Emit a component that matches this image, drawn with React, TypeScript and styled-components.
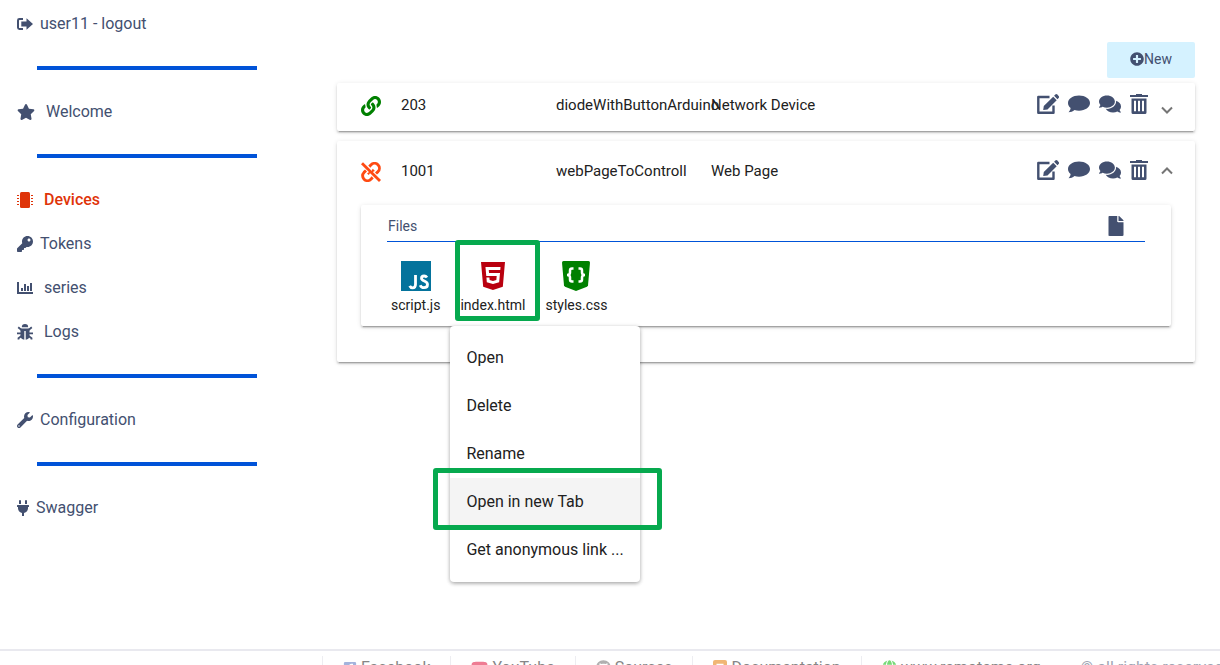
import React from 'react';
import styled, { createGlobalStyle, css } from 'styled-components';
import {
  FaComments,
  FaFacebookSquare,
  FaFile,
  FaGithub,
  FaGlobe,
  FaHtml5,
  FaKey,
  FaLink,
  FaPlug,
  FaPlusCircle,
  FaStar,
  FaWrench,
  FaYoutube,
} from 'react-icons/fa';

const ink = '#435070';
const blue = '#0053d8';
const mark = '#06a94e';

const GlobalStyle = createGlobalStyle`
  *, *::before, *::after { box-sizing: border-box; }
  html { scrollbar-width: none; overflow-x: hidden; }
  body {
    margin: 0;
    background: #fff;
    color: #212121;
    font-family: Roboto, "Liberation Sans", sans-serif;
    font-size: 14px;
    line-height: 20px;
  }
  button { font: inherit; color: inherit; border: 0; padding: 0; background: none; cursor: pointer; }
  a { color: inherit; text-decoration: none; }
  svg { display: block; flex: none; }
`;

const Layout = styled.div`
  display: flex;
  min-height: calc(100vh - 16px);
`;

const Sidebar = styled.nav`
  flex: 0 0 312px;
  padding-top: 2px;
  font-size: 16px;
  color: ${ink};
`;

const NavLink = styled.a<{ $active?: boolean; $wide?: boolean }>`
  display: flex;
  align-items: center;
  height: 44px;
  padding-left: 17px;
  gap: ${(p) => (p.$wide ? 11 : 7)}px;
  ${(p) => p.$active && css`color: #df3409; font-weight: 500;`}
`;

const PlugIcon = styled(FaPlug)`
  width: 12px;
  height: 16px;
`;

const Divider = styled.hr`
  height: 4px;
  margin: 20px 55px 20px 37px;
  border: 0;
  background: ${blue};
`;

const Main = styled.main`
  flex: 1;
  min-width: 0;
  padding: 42px 25px 0;
`;

const Toolbar = styled.div`
  display: flex;
  justify-content: flex-end;
  margin-bottom: 5px;
`;

const NewButton = styled.button`
  display: flex;
  align-items: center;
  justify-content: center;
  width: 88px;
  height: 36px;
  padding-bottom: 2px;
  border-radius: 2px;
  background: #d5f2ff;
  color: ${ink};
`;

const raised = css`
  border-radius: 2px;
  background: #fff;
  box-shadow: 0 3px 1px -2px rgba(0, 0, 0, 0.2), 0 2px 2px 0 rgba(0, 0, 0, 0.14),
    0 1px 5px 0 rgba(0, 0, 0, 0.12);
`;

const Card = styled.section<{ $open?: boolean }>`
  ${raised}
  margin-bottom: 10px;
  padding: 0 24px ${(p) => (p.$open ? 36 : 0)}px;
`;

const CardHeader = styled.header<{ $open?: boolean }>`
  display: grid;
  grid-template-columns: 40px 155px 155px 1fr auto;
  align-items: center;
  height: ${(p) => (p.$open ? 64 : 48)}px;
  padding-bottom: 4px;
  font-size: 15px;
  white-space: nowrap;
`;

const Status = styled.span<{ $on?: boolean }>`
  padding-top: 1px;
  color: ${(p) => (p.$on ? '#008000' : '#ff4a12')};
`;

const Actions = styled.div`
  display: flex;
  align-items: center;
  gap: 9px;
  padding-bottom: 2px;
  color: ${ink};
`;

const Toggle = styled.button<{ $low?: boolean }>`
  margin: ${(p) => (p.$low ? 12 : 2)}px -2px 0 4px;
  color: #757575;
`;

const Panel = styled.section`
  ${raised}
  padding: 0 26px;
`;

const PanelHeader = styled.header`
  display: flex;
  align-items: center;
  justify-content: space-between;
  height: 37px;
  padding: 5px 19px 0 1px;
  border-bottom: 1px solid ${blue};
  color: ${ink};
`;

const Heading = styled.h2`
  margin: 0;
  font-size: 14px;
  font-weight: 400;
`;

const Files = styled.ul`
  display: flex;
  align-items: flex-start;
  gap: 20px;
  height: 84px;
  margin: 0;
  padding: 18px 4px 0;
  list-style: none;
`;

const FileItem = styled.li`
  position: relative;
`;

const FileButton = styled.button`
  display: flex;
  flex-direction: column;
  align-items: center;
  gap: 3px;
`;

const FileIcon = styled.span<{ $color: string }>`
  display: grid;
  place-items: center;
  height: 32px;
  color: ${(p) => p.$color};
`;

const Menu = styled.ul`
  position: absolute;
  z-index: 1;
  top: 66px;
  left: -10px;
  margin: 0;
  padding: 8px 0;
  border-radius: 4px;
  list-style: none;
  background: #fff;
  font-size: 16px;
  box-shadow: 0 2px 4px -1px rgba(0, 0, 0, 0.2), 0 1px 5px 0 rgba(0, 0, 0, 0.14),
    0 1px 4px 0 rgba(0, 0, 0, 0.12);
`;

const MenuItem = styled.li`
  position: relative;
`;

const MenuButton = styled.button<{ $active?: boolean }>`
  width: 100%;
  height: 48px;
  padding: 0 16px;
  text-align: left;
  white-space: nowrap;
  background: ${(p) => (p.$active ? '#f4f4f4' : 'transparent')};
`;

const Highlight = styled.span<{ $inset: string }>`
  position: absolute;
  z-index: 2;
  inset: ${(p) => p.$inset};
  border: 5px solid ${mark};
  border-radius: 3px;
  pointer-events: none;
`;

const Footer = styled.footer`
  display: flex;
  height: 40px;
  padding: 5px 0 5px 322px;
  border-top: 2px solid #e9e9ef;
  overflow: hidden;
  font-size: 16px;
  color: #868686;
`;

const FooterLink = styled.a`
  display: flex;
  flex: none;
  align-items: center;
  gap: 4px;
  padding: 0 20px 5px;
  border-left: 1px solid #ededf1;
`;

const Rights = styled.span`
  flex: none;
  padding: 2px 20px 0;
  color: #a0a5b3;
`;

const Tint = styled.span<{ $color: string }>`
  color: ${(p) => p.$color};
`;

const SignOutIcon = () => (
  <svg width="16" height="16" viewBox="0 0 16 16" fill="currentColor" aria-hidden="true">
    <path d="M6 2H2.4A2.4 2.4 0 0 0 0 4.400v7.200A2.400 2.400 0 0 0 2.400 14H6v-2H2.600a.6.600 0 0 1-.6-.6V4.600a.6.600 0 0 1 .6-.6H6z" />
    <path d="M9.500 2.200 16 8l-6.500 5.800v-3.300H4.300v-5h5.200z" />
  </svg>
);

const ChipIcon = () => (
  <svg width="16" height="16" viewBox="0 0 16 16" fill="currentColor" aria-hidden="true">
    <rect x="3" width="10" height="16" rx="1.500" />
    <path
      d="M0 3.500h2M0 6.500h2M0 9.500h2M0 12.500h2M14 3.500h2M14 6.500h2M14 9.500h2M14 12.500h2"
      stroke="currentColor"
    />
  </svg>
);

const ChartIcon = () => (
  <svg width="16" height="16" viewBox="0 0 16 16" fill="currentColor" aria-hidden="true">
    <path d="M0 2h2v10h14v2H0zM4 8h2v3H4zM7 4h2v7H7zM10 6h2v5h-2zM13 3h2v8h-2z" />
  </svg>
);

const BugIcon = () => (
  <svg width="16" height="16" viewBox="0 0 16 16" fill="currentColor" aria-hidden="true">
    <path d="M4.800 3.300a3.200 3.200 0 0 1 6.400 0z" />
    <path d="M3.500 4.600h9v7a4.300 4.300 0 0 1-3.800 4.200V7H7.300v8.800a4.300 4.300 0 0 1-3.800-4.200z" />
    <path
      d="M1.200 3.200 4.500 6M14.800 3.200 11.500 6M0 9.300h4.500M16 9.300h-4.500M1.500 15.500v-1.200l3-2.300M14.500 15.500v-1.200l-3-2.300"
      fill="none"
      stroke="currentColor"
      strokeWidth="1.800"
    />
  </svg>
);

const UnlinkIcon = () => (
  <svg width="20" height="20" viewBox="0 0 20 20" fill="none" stroke="currentColor" aria-hidden="true">
    <path
      d="m8.300 4.600 1.800-1.800a4.700 4.700 0 0 1 6.900 6.800l-2 1.900M11.700 15.400l-1.800 1.800A4.700 4.700 0 0 1 3 10.400l2-1.900M11 8.100a3 3 0 0 1 1.500 1.500M8.600 11.800a3 3 0 0 1-1.200-1.300"
      strokeWidth="2.900"
    />
    <path d="M1 1.200 19 19" strokeWidth="2.800" />
  </svg>
);

const EditIcon = () => (
  <svg width="22" height="20" viewBox="0 0 22 20" fill="currentColor" aria-hidden="true">
    <path
      d="M12.500 3H1.300v15.700h15.200V11.500"
      fill="none"
      stroke="currentColor"
      strokeWidth="2.400"
      strokeLinejoin="round"
    />
    <path d="m16.200 2.700 3.500 3.500-9.200 9.200-4.300.7.600-4.200zM17.100 1.800l1.200-1.200a1.500 1.500 0 0 1 2.100 0l1.200 1.300a1.500 1.500 0 0 1 0 2.100l-1.100 1.200z" />
  </svg>
);

const CommentIcon = () => (
  <svg width="22" height="20" viewBox="0 0 22 20" fill="currentColor" aria-hidden="true">
    <path d="M11 1.500c6.200 0 11 3.300 11 7.600s-4.800 7.600-11 7.600c-1.600 0-3.100-.2-4.500-.7C4.800 17.300 2.700 18.300.6 18.300c1-1 1.900-2.600 2-4.200C1 12.700 0 11 0 9.100c0-4.300 4.800-7.600 11-7.600z" />
  </svg>
);

const TrashIcon = () => (
  <svg width="18" height="20" viewBox="0 0 18 20" fill="currentColor" aria-hidden="true">
    <path d="M6 0h6v1h6v2H0V1h6z" />
    <path
      fillRule="evenodd"
      d="M1.500 4.500h15v14a1.500 1.500 0 0 1-1.500 1.500H3a1.500 1.500 0 0 1-1.500-1.500zM4 6.700v10.600h2V6.700zm4 0v10.600h2V6.700zm4 0v10.600h2V6.700z"
    />
  </svg>
);

const Chevron = ({ up = false }: { up?: boolean }) => (
  <svg width="12" height="8" viewBox="0 0 12 8" fill="none" stroke="currentColor" strokeWidth="2" aria-hidden="true">
    <path d={up ? 'm1 6.500 5-5 5 5' : 'm1 1.500 5 5 5-5'} />
  </svg>
);

const JsIcon = () => (
  <svg width="30" height="30" viewBox="0 0 30 30" aria-hidden="true">
    <path d="M0 0h30v30H0z" fill="currentColor" />
    <path
      d="M14.500 14v9.200c0 2.600-1 3.600-2.900 3.600-1.400 0-2.300-.6-2.900-1.900M26 16.500c-.7-1-1.600-1.500-2.900-1.500-1.600 0-2.600.8-2.600 2.200 0 3.300 6 2.400 6 6.300 0 2-1.400 3.200-3.500 3.200-1.900 0-3.100-.9-3.800-2.500"
      fill="none"
      stroke="#fff"
      strokeWidth="2.800"
    />
  </svg>
);

const CssIcon = () => (
  <svg width="28" height="30" viewBox="0 0 28 30" aria-hidden="true">
    <path d="M1.500 0h25A1.500 1.500 0 0 1 28 1.500l-2 23-1 1.300L14 30 3 25.800l-1-1.300-2-23A1.500 1.500 0 0 1 1.500 0z" fill="currentColor" />
    <path
      d="M11.500 7.500H10c-1.500 0-2 .7-2 2v2c0 1.500-.8 2.500-3 2.500 2.200 0 3 1 3 2.500v2c0 1.300.5 2 2 2h1.500M16.500 7.500H18c1.500 0 2 .7 2 2v2c0 1.500.8 2.500 3 2.500-2.200 0-3 1-3 2.500v2c0 1.300-.5 2-2 2h-1.500"
      fill="none"
      stroke="#fff"
      strokeWidth="2.500"
    />
  </svg>
);

const DocIcon = () => (
  <svg width="14" height="16" viewBox="0 0 14 16" aria-hidden="true">
    <rect width="14" height="16" rx="2" fill="currentColor" />
    <path d="M3.500 4.500h7M3.500 8h7M3.500 11.500h7" stroke="#fff" strokeWidth="1.500" />
  </svg>
);

type DeviceProps = {
  id: string;
  name: string;
  kind: string;
  online?: boolean;
  open?: boolean;
  children?: React.ReactNode;
};

const Device = ({ id, name, kind, online, open, children }: DeviceProps) => (
  <Card $open={open}>
    <CardHeader $open={open}>
      <Status $on={online}>{online ? <FaLink size={20} /> : <UnlinkIcon />}</Status>
      <span>{id}</span>
      <span>{name}</span>
      <span>{kind}</span>
      <Actions>
        <button aria-label="Edit"><EditIcon /></button>
        <button aria-label="Comment"><CommentIcon /></button>
        <button aria-label="Comments"><FaComments size={22} /></button>
        <button aria-label="Delete"><TrashIcon /></button>
        <Toggle $low={!open} aria-label={open ? 'Collapse' : 'Expand'} aria-expanded={!!open}>
          <Chevron up={open} />
        </Toggle>
      </Actions>
    </CardHeader>
    {children}
  </Card>
);

const menu = ['Open', 'Delete', 'Rename', 'Open in new Tab', 'Get anonymous link ...'];

export default function App() {
  return (
    <>
      <GlobalStyle />
      <Layout>
        <Sidebar>
          <NavLink href="#logout"><SignOutIcon />user11 - logout</NavLink>
          <Divider />
          <NavLink href="#welcome" $wide><FaStar size={18} />Welcome</NavLink>
          <Divider />
          <NavLink href="#devices" $wide $active><ChipIcon />Devices</NavLink>
          <NavLink href="#tokens"><FaKey size={16} />Tokens</NavLink>
          <NavLink href="#series" $wide><ChartIcon />series</NavLink>
          <NavLink href="#logs" $wide><BugIcon />Logs</NavLink>
          <Divider />
          <NavLink href="#configuration"><FaWrench size={16} />Configuration</NavLink>
          <Divider />
          <NavLink href="#swagger"><PlugIcon />Swagger</NavLink>
        </Sidebar>
        <Main>
          <Toolbar>
            <NewButton><FaPlusCircle size={14} />New</NewButton>
          </Toolbar>
          <Device id="203" name="diodeWithButtonArduino" kind="Network Device" online />
          <Device id="1001" name="webPageToControll" kind="Web Page" open>
            <Panel>
              <PanelHeader>
                <Heading>Files</Heading>
                <button aria-label="New file"><FaFile size={20} /></button>
              </PanelHeader>
              <Files>
                <FileItem>
                  <FileButton>
                    <FileIcon $color="#04739c"><JsIcon /></FileIcon>
                    script.js
                  </FileButton>
                </FileItem>
                <FileItem>
                  <FileButton>
                    <FileIcon $color="#b9000f"><FaHtml5 size={32} /></FileIcon>
                    index.html
                  </FileButton>
                  <Highlight $inset="-20px -14px -6px -5px" />
                  <Menu>
                    {menu.map((label) => {
                      const active = label === 'Open in new Tab';
                      return (
                        <MenuItem key={label}>
                          <MenuButton $active={active}>{label}</MenuButton>
                          {active && <Highlight $inset="-10px -22px -4px -17px" />}
                        </MenuItem>
                      );
                    })}
                  </Menu>
                </FileItem>
                <FileItem>
                  <FileButton>
                    <FileIcon $color="#008000"><CssIcon /></FileIcon>
                    styles.css
                  </FileButton>
                </FileItem>
              </Files>
            </Panel>
          </Device>
        </Main>
      </Layout>
      <Footer>
        <FooterLink href="#facebook"><Tint $color="#a3b3dc"><FaFacebookSquare size={14} /></Tint>Facebook</FooterLink>
        <FooterLink href="#youtube"><Tint $color="#ee7c93"><FaYoutube size={17} /></Tint>YouTube</FooterLink>
        <FooterLink href="#sources"><Tint $color="#b0b0b0"><FaGithub size={15} /></Tint>Sources</FooterLink>
        <FooterLink href="#documentation"><Tint $color="#f0b674"><DocIcon /></Tint>Documentation</FooterLink>
        <FooterLink href="#site"><Tint $color="#77d977"><FaGlobe size={15} /></Tint>www.remoteme.org</FooterLink>
        <Rights>© all rights reserved</Rights>
      </Footer>
    </>
  );
}
